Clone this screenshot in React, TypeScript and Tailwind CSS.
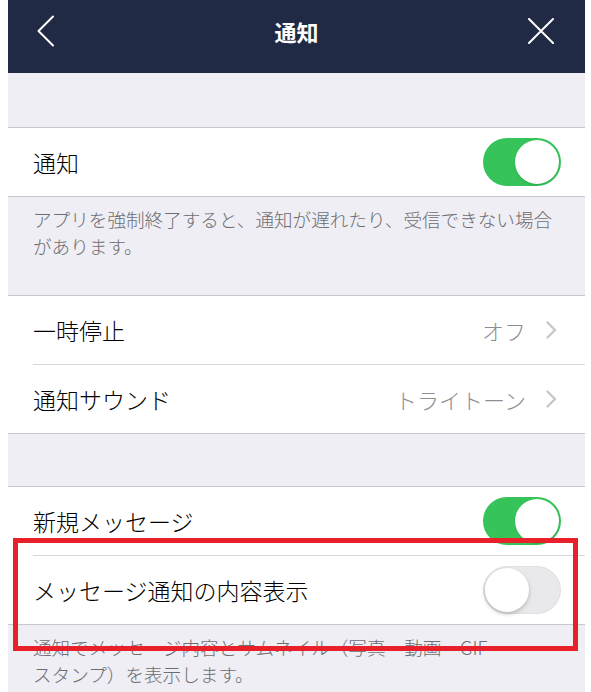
import { ReactNode } from "react";

const Toggle = ({ on }: { on: boolean }) => {
  if (on) {
    return (
      <div className="w-[78px] h-[48px] rounded-full bg-[#35c35a] flex items-center justify-end p-[2px]">
        <div className="w-[44px] h-[44px] rounded-full bg-white shadow-[0_1px_2px_rgba(0,0,0,0.15)]" />
      </div>
    );
  }
  return (
    <div className="w-[78px] h-[48px] rounded-full bg-[#e9e9eb] border border-[#e1e1e3] flex items-center justify-start p-[1px]">
      <div className="w-[44px] h-[44px] rounded-full bg-white shadow-[0_2px_4px_rgba(0,0,0,0.22)]" />
    </div>
  );
};

const Chevron = () => (
  <svg width="11" height="18" viewBox="0 0 11 18" fill="none">
    <path d="M1.5 1.5 L9 9 L1.5 16.5" stroke="#c7c7cc" strokeWidth="2.4" strokeLinecap="round" strokeLinejoin="round" />
  </svg>
);

const Row = ({ label, children }: { label: string; children: ReactNode }) => (
  <div className="h-[68px] bg-white flex items-center justify-between pl-[25px]">
    <span className="text-[23px] font-light leading-none text-black">{label}</span>
    {children}
  </div>
);

const ToggleRow = ({ label, on }: { label: string; on: boolean }) => (
  <Row label={label}>
    <div className="pr-[24px]">
      <Toggle on={on} />
    </div>
  </Row>
);

const LinkRow = ({ label, value }: { label: string; value: string }) => (
  <Row label={label}>
    <div className="flex items-center gap-[20px] pr-[28px]">
      <span className="text-[22px] font-light leading-none text-[#8e8e93]">{value}</span>
      <Chevron />
    </div>
  </Row>
);

const Divider = () => (
  <div className="bg-white">
    <div className="ml-[25px] h-px bg-[#d6d6da]" />
  </div>
);

export default function App() {
  return (
    <div className="relative min-h-screen bg-white font-['Noto_Sans_CJK_JP','Noto_Sans',sans-serif]">
      <div className="ml-[8px] w-[577px] min-h-[692px] bg-[#efeef4]">
        {/* nav bar */}
        <div className="h-[73px] bg-[#212a44] grid grid-cols-[1fr_auto_1fr] items-center pb-[12px]">
          <div className="pl-[29px]">
            <svg width="18" height="32" viewBox="0 0 18 32" fill="none">
              <path d="M16 1.5 L1.5 16 L16 30.5" stroke="white" strokeWidth="2" strokeLinecap="round" strokeLinejoin="round" />
            </svg>
          </div>
          <div className="text-white text-[22px] font-bold leading-none">通知</div>
          <div className="flex justify-end pr-[31px]">
            <svg width="26" height="26" viewBox="0 0 26 26" fill="none">
              <path d="M1 1 L25 25 M25 1 L1 25" stroke="white" strokeWidth="2" strokeLinecap="round" />
            </svg>
          </div>
        </div>

        <div className="h-[54px]" />

        <div className="border-y border-[#c8c7cc]">
          <ToggleRow label="通知" on />
        </div>
        <div className="h-[98px] pl-[25px] pt-[8px] text-[18.6px] font-light leading-[27px] text-[#6d6d72]">
          アプリを強制終了すると、通知が遅れたり、受信できない場合
          <br />
          があります。
        </div>

        <div className="border-y border-[#c8c7cc]">
          <LinkRow label="一時停止" value="オフ" />
          <Divider />
          <LinkRow label="通知サウンド" value="トライトーン" />
        </div>

        <div className="h-[52px]" />

        <div className="border-y border-[#c8c7cc]">
          <ToggleRow label="新規メッセージ" on />
          <Divider />
          <ToggleRow label="メッセージ通知の内容表示" on={false} />
        </div>
        <div className="pl-[25px] pt-[8px] text-[18.6px] font-light leading-[27px] text-[#6d6d72]">
          通知でメッセージ内容とサムネイル（写真・動画・GIF・
          <br />
          スタンプ）を表示します。
        </div>
      </div>

      {/* highlight frame */}
      <div className="absolute left-[13px] top-[538px] w-[565px] h-[113px] border-[5px] border-[#e8202a] pointer-events-none" />
    </div>
  );
}
